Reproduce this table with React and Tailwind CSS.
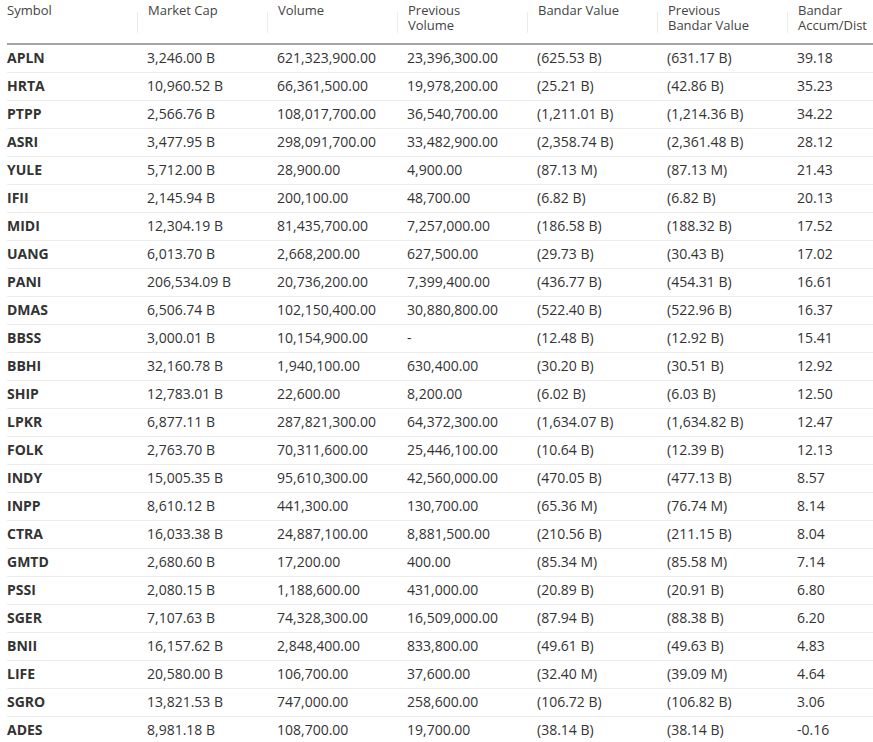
const columns = [
  'Symbol',
  'Market Cap',
  'Volume',
  'Previous Volume',
  'Bandar Value',
  'Previous Bandar Value',
  'Bandar Accum/Dist',
];

const headerLines = {
  'Previous Volume': ['Previous', 'Volume'],
  'Previous Bandar Value': ['Previous', 'Bandar Value'],
  'Bandar Accum/Dist': ['Bandar', 'Accum/Dist'],
};

const rows = [
  ['APLN', '3,246.00 B', '621,323,900.00', '23,396,300.00', '(625.53 B)', '(631.17 B)', '39.18'],
  ['HRTA', '10,960.52 B', '66,361,500.00', '19,978,200.00', '(25.21 B)', '(42.86 B)', '35.23'],
  ['PTPP', '2,566.76 B', '108,017,700.00', '36,540,700.00', '(1,211.01 B)', '(1,214.36 B)', '34.22'],
  ['ASRI', '3,477.95 B', '298,091,700.00', '33,482,900.00', '(2,358.74 B)', '(2,361.48 B)', '28.12'],
  ['YULE', '5,712.00 B', '28,900.00', '4,900.00', '(87.13 M)', '(87.13 M)', '21.43'],
  ['IFII', '2,145.94 B', '200,100.00', '48,700.00', '(6.82 B)', '(6.82 B)', '20.13'],
  ['MIDI', '12,304.19 B', '81,435,700.00', '7,257,000.00', '(186.58 B)', '(188.32 B)', '17.52'],
  ['UANG', '6,013.70 B', '2,668,200.00', '627,500.00', '(29.73 B)', '(30.43 B)', '17.02'],
  ['PANI', '206,534.09 B', '20,736,200.00', '7,399,400.00', '(436.77 B)', '(454.31 B)', '16.61'],
  ['DMAS', '6,506.74 B', '102,150,400.00', '30,880,800.00', '(522.40 B)', '(522.96 B)', '16.37'],
  ['BBSS', '3,000.01 B', '10,154,900.00', '-', '(12.48 B)', '(12.92 B)', '15.41'],
  ['BBHI', '32,160.78 B', '1,940,100.00', '630,400.00', '(30.20 B)', '(30.51 B)', '12.92'],
  ['SHIP', '12,783.01 B', '22,600.00', '8,200.00', '(6.02 B)', '(6.03 B)', '12.50'],
  ['LPKR', '6,877.11 B', '287,821,300.00', '64,372,300.00', '(1,634.07 B)', '(1,634.82 B)', '12.47'],
  ['FOLK', '2,763.70 B', '70,311,600.00', '25,446,100.00', '(10.64 B)', '(12.39 B)', '12.13'],
  ['INDY', '15,005.35 B', '95,610,300.00', '42,560,000.00', '(470.05 B)', '(477.13 B)', '8.57'],
  ['INPP', '8,610.12 B', '441,300.00', '130,700.00', '(65.36 M)', '(76.74 M)', '8.14'],
  ['CTRA', '16,033.38 B', '24,887,100.00', '8,881,500.00', '(210.56 B)', '(211.15 B)', '8.04'],
  ['GMTD', '2,680.60 B', '17,200.00', '400.00', '(85.34 M)', '(85.58 M)', '7.14'],
  ['PSSI', '2,080.15 B', '1,188,600.00', '431,000.00', '(20.89 B)', '(20.91 B)', '6.80'],
  ['SGER', '7,107.63 B', '74,328,300.00', '16,509,000.00', '(87.94 B)', '(88.38 B)', '6.20'],
  ['BNII', '16,157.62 B', '2,848,400.00', '833,800.00', '(49.61 B)', '(49.63 B)', '4.83'],
  ['LIFE', '20,580.00 B', '106,700.00', '37,600.00', '(32.40 M)', '(39.09 M)', '4.64'],
  ['SGRO', '13,821.53 B', '747,000.00', '258,600.00', '(106.72 B)', '(106.82 B)', '3.06'],
  ['ADES', '8,981.18 B', '108,700.00', '19,700.00', '(38.14 B)', '(38.14 B)', '-0.16'],
];

export default function App() {
  return (
    <div className="bg-white pl-[7px] font-['Open_Sans',sans-serif] text-[#333]">
      <table className="w-[866px] table-fixed border-collapse">
        <colgroup>
          <col className="w-[130px]" />
          <col className="w-[130px]" />
          <col className="w-[130px]" />
          <col className="w-[130px]" />
          <col className="w-[130px]" />
          <col className="w-[130px]" />
          <col className="w-[86px]" />
        </colgroup>
        <thead>
          <tr className="border-b-2 border-[#a3a3a3]">
            {columns.map((col, i) => (
              <th key={col} className="h-[44px] p-0 text-left align-top font-normal">
                <div className="flex">
                  {i > 0 && <div className="mt-[12px] h-[21px] w-px bg-[#ececec]" />}
                  <div className={`pt-[3px] text-[13px] leading-[15px] text-[#444] ${i > 0 ? 'pl-[10px]' : ''}`}>
                    {(headerLines[col] || [col]).map(line => (
                      <div key={line}>{line}</div>
                    ))}
                  </div>
                </div>
              </th>
            ))}
          </tr>
        </thead>
        <tbody>
          {rows.map(row => (
            <tr key={row[0]} className="border-b border-[#ececec]">
              {row.map((cell, i) => (
                <td
                  key={i}
                  className={`h-[28px] p-0 align-middle text-[14px] leading-[18px] ${i === 0 ? 'font-bold' : 'pl-[10px]'}`}
                >
                  {cell}
                </td>
              ))}
            </tr>
          ))}
        </tbody>
      </table>
    </div>
  );
}
